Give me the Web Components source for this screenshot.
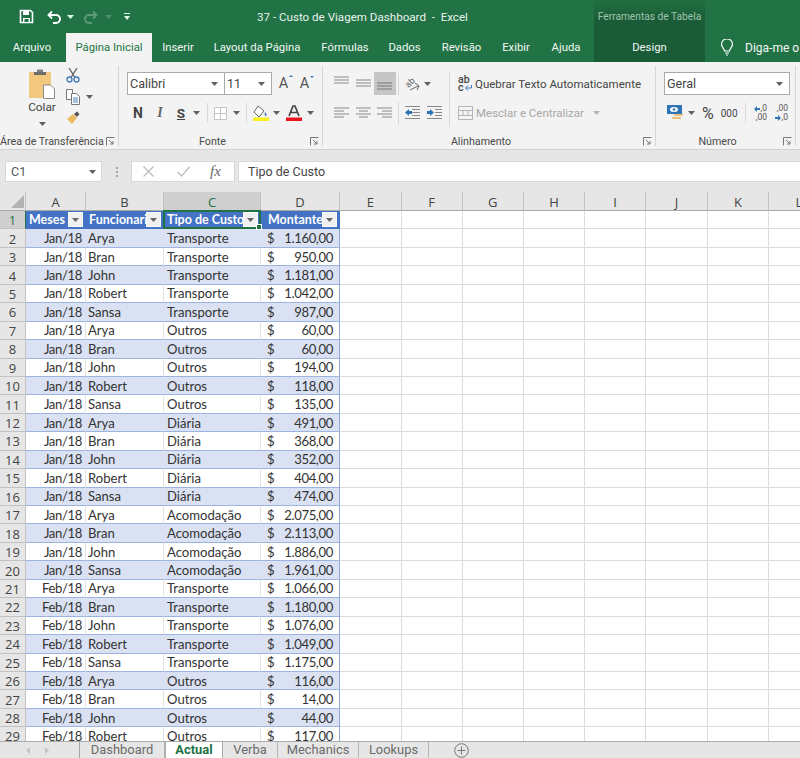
<!DOCTYPE html>
<html lang="pt">
<head>
<meta charset="utf-8">
<title>37 - Custo de Viagem Dashboard - Excel</title>
<style>
  html, body { margin: 0; padding: 0; }
  body { width: 800px; height: 758px; overflow: hidden; display: flex; flex-direction: column; font-family: Roboto, sans-serif; }
</style>
</head>
<body>
<xl-titlebar></xl-titlebar>
<xl-tabs></xl-tabs>
<xl-ribbon>
  <xl-group label="Área de Transferência" width="119" launcher><xl-clipboard></xl-clipboard></xl-group>
  <xl-group label="Fonte" width="204" launcher><xl-font-tools></xl-font-tools></xl-group>
  <xl-group label="Alinhamento" width="333" launcher><xl-align-tools></xl-align-tools></xl-group>
  <xl-group label="Número" width="140" launcher><xl-number-tools></xl-number-tools></xl-group>
</xl-ribbon>
<xl-formula-bar></xl-formula-bar>
<xl-sheet></xl-sheet>
<xl-sheet-tabs></xl-sheet-tabs>

<script>
const caret = (c = '#5f5f5f') => `<svg width="7" height="4" viewBox="0 0 7 4"><path d="M0 0h7L3.5 4z" fill="${c}"/></svg>`;

class XlTitlebar extends HTMLElement {
  constructor() {
    super();
    this.attachShadow({ mode: 'open' }).innerHTML = `
    <style>
      :host { display: flex; height: 33px; background: #217346; color: #fff; font-size: 11.600px; align-items: center; }
      .qat { display: flex; align-items: center; width: 257px; padding-left: 19px; box-sizing: border-box; flex: none; }
      .title { width: 337px; flex: none; white-space: pre; color: #e9f1ec; }
      .tools { width: 111px; height: 33px; flex: none; background: linear-gradient(#21703f, #1b5c38 60%); color: #9fc4ae; font-size: 10.200px; display: flex; align-items: center; justify-content: center; white-space: nowrap; }
    </style>
    <div class="qat">
      <svg width="15" height="15" viewBox="0 0 15 15"><path d="M1.500 1.500h10l2 2v10h-12z" fill="none" stroke="#fff" stroke-width="1.600"/><path d="M4 2h6v4H4z" fill="#fff"/><path d="M4 9h7v4H4z" fill="#fff"/><path d="M5.500 10h4v3h-4z" fill="#217346"/></svg>
      <svg style="margin-left:13px" width="15" height="14" viewBox="0 0 15 14"><path d="M5 1.500 1.500 5 5 8.500M2 5h7a4 4 0 0 1 0 8H6" fill="none" stroke="#fff" stroke-width="1.900"/></svg>
      <span style="margin-left:5px;display:flex">${caret('#dfe')}</span>
      <svg style="margin-left:9px" width="15" height="14" viewBox="0 0 15 14"><path d="M10 1.500 13.500 5 10 8.500M13 5H6a4 4 0 0 0 0 8h3" fill="none" stroke="#5d9a78" stroke-width="1.900"/></svg>
      <span style="margin-left:7px;display:flex">${caret('#4f8f6c')}</span>
      <svg style="margin-left:12px" width="6" height="7" viewBox="0 0 6 7"><path d="M0 0h6v1H0zM0 3h6L3 7z" fill="#dfe"/></svg>
    </div>
    <div class="title">37 - Custo de Viagem Dashboard  -  Excel</div>
    <div class="tools">Ferramentas de Tabela</div>`;
  }
}

class XlTabs extends HTMLElement {
  constructor() {
    super();
    this.attachShadow({ mode: 'open' }).innerHTML = `
    <style>
      :host { display: flex; height: 29px; background: #217346; color: #f2f7f4; font-size: 11.300px; }
      div { display: flex; align-items: center; justify-content: center; white-space: nowrap; flex: none; box-sizing: border-box; }
      .on { background: #f3f3f3; color: #217346; }
      .design { background: #1b5c38; }
      .diga { justify-content: flex-start; }
    </style>
    <div style="width:66px;padding-right:2px">Arquivo</div>
    <div class="on" style="width:86px">Página Inicial</div>
    <div style="width:52px">Inserir</div>
    <div style="width:106px">Layout da Página</div>
    <div style="width:70px">Fórmulas</div>
    <div style="width:49px">Dados</div>
    <div style="width:65px">Revisão</div>
    <div style="width:44px">Exibir</div>
    <div style="width:56px">Ajuda</div>
    <div class="design" style="width:111px">Design</div>
    <div class="diga" style="width:95px;padding-left:15px">
      <svg width="14" height="17" viewBox="0 0 14 17"><path d="M4.500 12c0-2.500-3-3.500-3-6.700a5.500 5.500 0 0 1 11 0c0 3.200-3 4.200-3 6.700zM5 14h4M6 16h2" fill="none" stroke="#fff" stroke-width="1.200"/></svg>
      <span style="margin-left:11px;font-size:12px">Diga-me o</span>
    </div>`;
  }
}

class XlRibbon extends HTMLElement {
  constructor() {
    super();
    this.attachShadow({ mode: 'open' }).innerHTML = `
    <style>
      :host { display: flex; height: 88px; flex: none; background: #f3f3f3; border-bottom: 1px solid #d2d2d2; box-sizing: border-box; overflow: hidden; }
    </style><slot></slot>`;
  }
}

class XlGroup extends HTMLElement {
  constructor() {
    super();
    this.attachShadow({ mode: 'open' }).innerHTML = `
    <style>
      :host { display: flex; flex-direction: column; flex: none; box-sizing: border-box; height: 80px; margin-top: 4px; border-right: 1px solid #d5d5d5; position: relative; color: #444; }
      .body { height: 68px; }
      .label { height: 12px; line-height: 16px; font-size: 10.700px; text-align: center; color: #4a4a4a; white-space: nowrap; padding-right: 16px; }
      svg { position: absolute; right: 3px; bottom: 0; }
    </style>
    <div class="body"><slot></slot></div>
    <div class="label"></div>
    <svg width="9" height="9" viewBox="0 0 9 9"><path d="M.5 8.500v-8h8M3 3l4 4M7 4v3H4" fill="none" stroke="#777"/></svg>`;
  }
  connectedCallback() {
    this.style.width = this.getAttribute('width') + 'px';
    this.shadowRoot.querySelector('.label').textContent = this.getAttribute('label');
  }
}

class XlClipboard extends HTMLElement {
  constructor() {
    super();
    this.attachShadow({ mode: 'open' }).innerHTML = `
    <style>
      :host { display: flex; height: 64px; padding-left: 24px; }
      .big { width: 36px; display: flex; flex-direction: column; align-items: center; padding-top: 2px; font-size: 11.800px; color: #444; }
      .big span { line-height: 17px; }
      .small { margin-left: 6px; display: flex; flex-direction: column; padding-top: 2px; gap: 6px; }
      .row { display: flex; align-items: center; gap: 6px; }
    </style>
    <div class="big">
      <svg width="28" height="31" viewBox="0 0 28 31"><path d="M1 4h22v26H1z" fill="#f2c77e"/><path d="M6 4h12v3H6z" fill="#6d6d6d"/><path d="M9 1.500h6V4H9z" fill="#7d7d7d"/><path d="M15.500 17h7l4 4v9.500h-11z" fill="#fff" stroke="#8a8a8a"/></svg>
      <span>Colar</span>
      <span style="display:flex;margin-top:6px">${caret()}</span>
    </div>
    <div class="small">
      <svg width="14" height="15" viewBox="0 0 14 15"><path d="M3 0l6 9.500M11 0 5 9.500" stroke="#666" stroke-width="1.400" fill="none"/><circle cx="3.500" cy="11.500" r="2.500" fill="none" stroke="#3f78b5" stroke-width="1.300"/><circle cx="10.500" cy="11.500" r="2.500" fill="none" stroke="#3f78b5" stroke-width="1.300"/></svg>
      <div class="row">
        <svg width="14" height="16" viewBox="0 0 14 16"><path d="M.5.500h6v10h-6z" fill="#fff" stroke="#777"/><path d="M5.500 4.500h5l3 3v8h-8z" fill="#fff" stroke="#777"/><path d="M7 9h5M7 11h5M7 13h5" stroke="#4a86c0"/></svg>
        <span style="display:flex">${caret()}</span>
      </div>
      <svg width="14" height="14" viewBox="0 0 14 14"><path d="M1 8l6-5 4 4-5 6z" fill="#edb95f"/><path d="M8 3l3-2.500 2.500 2.500L11 6z" fill="#555"/></svg>
    </div>`;
  }
}

class XlFontTools extends HTMLElement {
  constructor() {
    super();
    this.attachShadow({ mode: 'open' }).innerHTML = `
    <style>
      :host { display: block; padding: 6px 0 0 8px; }
      .row { display: flex; align-items: center; }
      .sel { height: 23px; box-sizing: border-box; background: #fff; border: 1px solid #ababab; display: flex; align-items: center; justify-content: space-between; padding: 0 6px 0 2px; font-size: 12.500px; color: #444; }
      .r2 { height: 22px; margin-top: 7px; }
      .sep { width: 1px; height: 20px; background: #d8d8d8; }
      .b { font-size: 14px; color: #444; text-align: center; width: 22px; }
      .grow { font-size: 14.500px; color: #555; position: relative; width: 21px; text-align: center; }
      .grow i { position: absolute; right: 1px; width: 0; height: 0; border: 2.500px solid transparent; }
    </style>
    <div class="row">
      <div class="sel" style="width:98px">Calibri${caret()}</div>
      <div class="sel" style="width:48px;margin-left:-1px">11${caret()}</div>
      <div class="grow" style="margin-left:1px">A<i style="border-bottom-color:#3f78b5;top:-2px"></i></div>
      <div class="grow">A<i style="border-top-color:#3f78b5;top:1px"></i></div>
    </div>
    <div class="row r2">
      <div class="b" style="font-weight:700">N</div>
      <div class="b" style="font-style:italic;font-family:'Liberation Serif',serif;font-weight:700;color:#666">I</div>
      <div class="b" style="font-weight:700;text-decoration:underline;width:20px;font-size:13.500px">S</div>
      <span style="display:flex;margin:0 7px 0 2px">${caret()}</span>
      <div class="sep"></div>
      <svg style="margin-left:6px" width="13" height="13" viewBox="0 0 13 13"><path d="M.5.500h12v12H.5zM6.500.500v12M.5 6.500h12" fill="#fff" stroke="#c5c5c5"/></svg>
      <span style="display:flex;margin:0 6px 0 6px">${caret()}</span>
      <div class="sep"></div>
      <svg style="margin-left:6px" width="16" height="16" viewBox="0 0 16 16"><path d="M5 1l6 5-5 6-5-5z" fill="#fff" stroke="#666"/><path d="M12 7c2 2 2 4 1 4s-2-2-1-4z" fill="#3f78b5"/><path d="M0 12.500h16V16H0z" fill="#f7f01e"/></svg>
      <span style="display:flex;margin:0 6px 0 4px">${caret()}</span>
      <svg width="16" height="16" viewBox="0 0 16 16"><path d="M3 11 7 1h2l4 10M5 7.500h6" fill="none" stroke="#444" stroke-width="1.700"/><path d="M0 12.500h16V16H0z" fill="#e8131c"/></svg>
      <span style="display:flex;margin-left:5px">${caret()}</span>
    </div>`;
  }
}

const alignIcon = (rows, c = '#888') => `<svg width="15" height="${rows.length * 3}" viewBox="0 0 15 ${rows.length * 3}">${rows.map((r, i) => `<path d="M${r[0]} ${i * 3 + 1}h${r[1]}" stroke="${c}"/>`).join('')}</svg>`;

class XlAlignTools extends HTMLElement {
  constructor() {
    super();
    const full = [[0, 15], [0, 15], [0, 15]];
    this.attachShadow({ mode: 'open' }).innerHTML = `
    <style>
      :host { display: flex; padding: 6px 0 0 8px; height: 58px; font-size: 11.500px; color: #444; }
      .col { width: 118px; flex: none; }
      .row { display: flex; align-items: center; height: 23px; }
      .r2 { margin-top: 6px; }
      .c { width: 21.500px; height: 23px; display: flex; justify-content: center; box-sizing: border-box; flex: none; }
      .top { align-items: flex-start; padding-top: 4px; }
      .mid { align-items: center; }
      .bot { align-items: flex-end; padding-bottom: 4px; }
      .on { background: #c6c6c6; }
      .sep { width: 1px; height: 22px; background: #d8d8d8; margin: 0 6px 0 2px; flex: none; }
      .tall { width: 1px; height: 55px; background: #d8d8d8; flex: none; }
      .wrap { margin-left: 8px; }
      .dim { color: #a8a8a8; }
      .ab { font-size: 10.500px; line-height: 8px; width: 14px; height: 16px; color: #444; white-space: pre; font-weight: 500; margin-right: 3px; position: relative; }
      .ab svg { position: absolute; right: 0; bottom: 1px; }
      .turn { overflow: visible; }
    </style>
    <div class="col">
      <div class="row">
        <div class="c top">${alignIcon(full)}</div>
        <div class="c mid">${alignIcon(full)}</div>
        <div class="c bot on">${alignIcon(full, '#777')}</div>
        <div class="sep"></div>
        <svg class="turn" width="16" height="16" viewBox="0 0 16 16"><text x="1" y="10" font-size="9" font-family="Roboto, sans-serif" fill="#666" transform="rotate(-45 5 8)">ab</text><path d="M5 14l8-4M10 7l4 3-2 4" fill="none" stroke="#666"/></svg>
        <span style="display:flex;margin-left:3px">${caret()}</span>
      </div>
      <div class="row r2">
        <div class="c mid">${alignIcon([[0, 15], [0, 10], [0, 15], [0, 10]])}</div>
        <div class="c mid">${alignIcon([[0, 15], [3, 9], [0, 15], [3, 9]])}</div>
        <div class="c mid">${alignIcon([[0, 15], [5, 10], [0, 15], [5, 10]])}</div>
        <div class="sep"></div>
        <svg width="15" height="13" viewBox="0 0 15 13"><path d="M0 .5h15M7 3.500h8M7 6.500h8M7 9.500h8M0 12.500h15" stroke="#888"/><path d="M0 6.500 4 3v2h3v3H4v2z" fill="#2f74b5"/></svg>
        <svg style="margin-left:7px" width="15" height="13" viewBox="0 0 15 13"><path d="M0 .5h15M8 3.500h7M8 6.500h7M8 9.500h7M0 12.500h15" stroke="#888"/><path d="M7 6.500 3 3v2H0v3h3v2z" fill="#2f74b5"/></svg>
      </div>
    </div>
    <div class="tall"></div>
    <div class="wrap">
      <div class="row" style="white-space:nowrap"><div class="ab">ab
c<svg width="8" height="6" viewBox="0 0 8 6"><path d="M7.500 0v3H2M4 .5 1.500 3 4 5.500" fill="none" stroke="#3f78b5"/></svg></div>Quebrar Texto Automaticamente</div>
      <div class="row r2 dim" style="white-space:nowrap">
        <svg style="margin-right:3px" width="15" height="14" viewBox="0 0 15 14"><path d="M.5.500h14v13H.5zM.5 4.500h14M.5 9.500h14M5 4.500v5M10 4.500v5" fill="#f3f3f3" stroke="#b5b5b5"/></svg>
        Mesclar e Centralizar<span style="display:flex;margin-left:9px">${caret('#b5b5b5')}</span>
      </div>
    </div>`;
  }
}

class XlNumberTools extends HTMLElement {
  constructor() {
    super();
    this.attachShadow({ mode: 'open' }).innerHTML = `
    <style>
      :host { display: block; padding: 6px 0 0 8px; color: #444; }
      .sel { width: 126px; height: 23px; box-sizing: border-box; background: #fff; border: 1px solid #ababab; display: flex; align-items: center; justify-content: space-between; padding: 0 6px 0 2px; font-size: 12.500px; }
      .row { display: flex; align-items: center; height: 22px; margin-top: 7px; padding-left: 3px; }
      .sep { width: 1px; height: 20px; background: #d8d8d8; margin: 0 8px 0 7px; }
      .d { font-size: 8.500px; line-height: 9px; color: #555; width: 13px; display: grid; justify-items: end; }
      .d span { display: flex; align-items: center; gap: 1px; height: 9px; }
    </style>
    <div class="sel">Geral${caret()}</div>
    <div class="row">
      <svg width="16" height="16" viewBox="0 0 16 16"><path d="M0 0h15v9H0z" fill="#2f74b5"/><ellipse cx="7" cy="4.500" rx="4" ry="2.500" fill="#fff"/><circle cx="7" cy="4.500" r="1.300" fill="#2f74b5"/><path d="M7 9h9v2H7zM5 12h9v2H5z" fill="#edc27a"/></svg>
      <span style="display:flex;margin-left:5px">${caret()}</span>
      <span style="font-size:16px;margin-left:7px">%</span>
      <span style="font-size:10px;margin-left:7px">000</span>
      <div class="sep"></div>
      <div class="d"><span><svg width="6" height="6" viewBox="0 0 6 6"><path d="M0 3l3-3v2h3v2H3v2z" fill="#2f74b5"/></svg>,0</span><span>,00</span></div>
      <div class="d" style="margin-left:8px"><span>,00</span><span><svg width="6" height="6" viewBox="0 0 6 6"><path d="M6 3 3 0v2H0v2h3v2z" fill="#2f74b5"/></svg>,0</span></div>
    </div>`;
  }
}

class XlFormulaBar extends HTMLElement {
  constructor() {
    super();
    this.attachShadow({ mode: 'open' }).innerHTML = `
    <style>
      :host { display: flex; height: 42px; flex: none; box-sizing: border-box; background: #e6e6e6; padding: 11px 0 0 5px; font-size: 12.500px; color: #555; }
      .box { height: 21px; background: #fff; display: flex; align-items: center; box-sizing: border-box; border: 1px solid #d8d8d8; }
      .name { width: 97px; justify-content: space-between; padding: 0 5px; }
      .dots { width: 29px; display: flex; flex-direction: column; align-items: center; justify-content: center; gap: 2px; height: 21px; }
      .dots i { width: 2px; height: 2px; background: #a5a5a5; }
      .fx { width: 104px; padding-left: 11px; }
      .val { flex: 1; margin-left: 3px; padding-left: 9px; border-right: 0; color: #444; }
    </style>
    <div class="box name">C1${caret()}</div>
    <div class="dots"><i></i><i></i><i></i></div>
    <div class="box fx">
      <svg width="11" height="11" viewBox="0 0 11 11"><path d="M.5.500l10 10M10.500.500l-10 10" stroke="#bdbdbd" stroke-width="1.300"/></svg>
      <svg style="margin-left:23px" width="13" height="11" viewBox="0 0 13 11"><path d="M.5 6l4 4 8-9" fill="none" stroke="#bdbdbd" stroke-width="1.300"/></svg>
      <span style="font-family:'Liberation Serif',serif;font-style:italic;font-size:15px;color:#666;margin-left:20px">fx</span>
    </div>
    <div class="box val">Tipo de Custo</div>`;
  }
}

const ROWS = `Jan/18|Arya|Transporte|1.160,00
Jan/18|Bran|Transporte|950,00
Jan/18|John|Transporte|1.181,00
Jan/18|Robert|Transporte|1.042,00
Jan/18|Sansa|Transporte|987,00
Jan/18|Arya|Outros|60,00
Jan/18|Bran|Outros|60,00
Jan/18|John|Outros|194,00
Jan/18|Robert|Outros|118,00
Jan/18|Sansa|Outros|135,00
Jan/18|Arya|Diária|491,00
Jan/18|Bran|Diária|368,00
Jan/18|John|Diária|352,00
Jan/18|Robert|Diária|404,00
Jan/18|Sansa|Diária|474,00
Jan/18|Arya|Acomodação|2.075,00
Jan/18|Bran|Acomodação|2.113,00
Jan/18|John|Acomodação|1.886,00
Jan/18|Sansa|Acomodação|1.961,00
Feb/18|Arya|Transporte|1.066,00
Feb/18|Bran|Transporte|1.180,00
Feb/18|John|Transporte|1.076,00
Feb/18|Robert|Transporte|1.049,00
Feb/18|Sansa|Transporte|1.175,00
Feb/18|Arya|Outros|116,00
Feb/18|Bran|Outros|14,00
Feb/18|John|Outros|44,00
Feb/18|Robert|Outros|117,00`.split('\n').map(l => l.split('|'));

class XlSheet extends HTMLElement {
  constructor() {
    super();
    const cols = 'ABCDEFGHIJKL'.split('');
    const blanks = '<div class="c"></div>'.repeat(8);
    let html = `<div class="ch corner"><svg width="13" height="13" viewBox="0 0 13 13"><path d="M13 0v13H0z" fill="#b3b3b3"/></svg></div>`;
    cols.forEach(c => { html += `<div class="ch${c === 'C' ? ' sel' : ''}">${c}</div>`; });
    html += `<div class="rh sel">1</div>`;
    ['Meses', 'Funcionario', 'Tipo de Custo', 'Montante'].forEach((h, i) => {
      html += `<div class="c th${i === 3 ? ' in' : ''}"><span>${h}</span><b>${caret('#666')}</b>${i === 2 ? '<u><i></i></u>' : ''}</div>`;
    });
    html += blanks;
    ROWS.forEach((r, i) => {
      const band = i % 2 === 0 ? ' band' : '';
      html += `<div class="rh">${i + 2}</div>
        <div class="c t${band} r n">${r[0]}</div>
        <div class="c t${band} b">${r[1]}</div>
        <div class="c t${band}">${r[2]}</div>
        <div class="c t${band} m n last"><span>$</span><span>${r[3]}</span></div>` + blanks;
    });
    this.attachShadow({ mode: 'open' }).innerHTML = `
    <style>
      :host { display: block; flex: 1; min-height: 0; overflow: hidden; background: #fff; font-family: Lato, sans-serif; font-size: 13.100px; color: #333; }
      .g { display: grid; grid-template-columns: 26px 60px 78px 97px 79px 61.500px 61px 61.500px 61px 61px 62px 61px 61px; grid-auto-rows: 18.450px; grid-template-rows: 19px; }
      .ch, .rh { background: #e6e6e6; color: #444; display: flex; align-items: center; justify-content: center; box-sizing: border-box; border-right: 1px solid #c2c2c2; border-bottom: 1px solid #c2c2c2; font-family: "Open Sans", sans-serif; font-size: 13px; padding-top: 1px; }
      .ch { border-bottom-color: #a8a8a8; }
      .corner { justify-content: flex-end; padding: 0 1px 0 0; }
      .sel { background: #cfcfcf; color: #217346; }
      .rh.sel { color: #217346; border-right: 1px solid #217346; }
      .c { box-sizing: border-box; border-right: 1px solid #dcdcdc; border-bottom: 1px solid #dcdcdc; white-space: nowrap; overflow: hidden; padding: 1px 3px 0; display: flex; align-items: center; line-height: 17px; }
      .t { border-bottom-color: #9db4e0; border-right-color: #e3e3e3; }
      .band { background: #d9e1f2; border-right-color: #d9e1f2; }
      .r { justify-content: flex-end; }
      .b { padding-left: 2px; }
      .n { letter-spacing: -.35px; }
      .m { justify-content: space-between; padding: 1px 6px 0; }
      .last { border-right-color: #8ea9db; }
      .th { background: #4472c4; color: #fff; font-size: 12.500px; font-weight: 700; position: relative; border-color: #4472c4; padding: 0 0 0 3px; overflow: visible; }
      .th.in { padding-left: 7px; }
      .th span { overflow: hidden; flex: 1; }
      .th b { width: 15px; height: 15px; flex: none; margin-right: 2px; background: #f0f0f0; display: flex; align-items: center; justify-content: center; border: 1px solid #fafafa; box-sizing: border-box; }
      .th u { position: absolute; inset: -1px; border: 2px solid #217346; box-sizing: border-box; pointer-events: none; z-index: 1; }
      .th u i { position: absolute; right: -3px; bottom: -3px; width: 6px; height: 6px; background: #217346; border: 1px solid #fff; box-sizing: border-box; }
    </style>
    <div class="g">${html}</div>`;
  }
}

class XlSheetTabs extends HTMLElement {
  constructor() {
    super();
    this.attachShadow({ mode: 'open' }).innerHTML = `
    <style>
      :host { display: flex; height: 17px; flex: none; background: #e6e6e6; border-top: 1px solid #ababab; box-sizing: border-box; font-size: 12.900px; color: #6b6b6b; align-items: stretch; line-height: 14px; }
      .nav { width: 80px; display: flex; align-items: center; justify-content: space-around; padding: 0 22px 0 18px; box-sizing: border-box; border-right: 1px solid #a5a5a5; }
      .tab { display: flex; align-items: center; justify-content: center; box-sizing: border-box; border-right: 1px solid #b5b5b5; margin: 0; padding-bottom: 1px; }
      .on { background: #fff; color: #217346; font-weight: 700; border-left: 1px solid #ababab; border-right: 1px solid #ababab; }
      .plus { margin-left: 25px; align-self: center; margin-top: 1px; }
    </style>
    <div class="nav">
      <svg width="4" height="7" viewBox="0 0 4 7"><path d="M4 0v7L0 3.500z" fill="#c4c4c4"/></svg>
      <svg width="4" height="7" viewBox="0 0 4 7"><path d="M0 0v7l4-3.500z" fill="#c4c4c4"/></svg>
    </div>
    <div class="tab" style="width:85px">Dashboard</div>
    <div class="tab on" style="width:58px">Actual</div>
    <div class="tab" style="width:55px">Verba</div>
    <div class="tab" style="width:81px">Mechanics</div>
    <div class="tab" style="width:70px">Lookups</div>
    <svg class="plus" width="15" height="15" viewBox="0 0 15 15"><circle cx="7.500" cy="7.500" r="6.800" fill="none" stroke="#777"/><path d="M7.500 3.500v8M3.500 7.500h8" stroke="#777"/></svg>`;
  }
}

customElements.define('xl-titlebar', XlTitlebar);
customElements.define('xl-tabs', XlTabs);
customElements.define('xl-ribbon', XlRibbon);
customElements.define('xl-group', XlGroup);
customElements.define('xl-clipboard', XlClipboard);
customElements.define('xl-font-tools', XlFontTools);
customElements.define('xl-align-tools', XlAlignTools);
customElements.define('xl-number-tools', XlNumberTools);
customElements.define('xl-formula-bar', XlFormulaBar);
customElements.define('xl-sheet', XlSheet);
customElements.define('xl-sheet-tabs', XlSheetTabs);
</script>
</body>
</html>
